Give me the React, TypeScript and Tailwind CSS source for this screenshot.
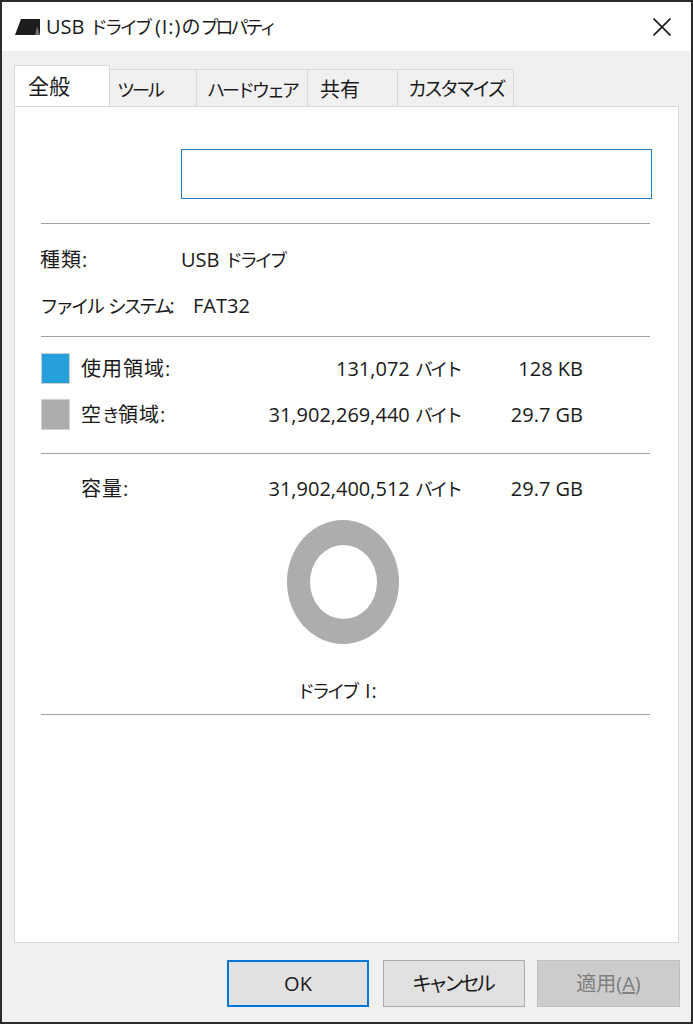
const font = { fontFamily: '"Open Sans", "Noto Sans CJK JP", sans-serif' };

// katakana in the reference is much narrower than Noto's full-width glyphs
function Kana({ children }: { children: string }) {
  return <span className="text-[18px] tracking-[-3px]">{children}</span>;
}

function Tab({ className, children }: { className: string; children: React.ReactNode }) {
  return (
    <div className={`flex h-[37px] items-center whitespace-nowrap border border-b-0 border-l-0 border-[#d9d9d9] bg-[#f0f0f0] pt-[3px] text-[20px] ${className}`}>
      {children}
    </div>
  );
}

function Divider({ className }: { className: string }) {
  return <div className={`ml-[26px] h-px w-[609px] bg-[#a0a0a0] ${className}`} />;
}

function SizeRow({ swatch, label, bytes, size, className }: { swatch?: string; label: React.ReactNode; bytes: string; size: string; className: string }) {
  return (
    <div className={`ml-[26px] flex h-[31px] items-center whitespace-nowrap text-[20px] ${className}`}>
      <div className={`h-[31px] w-[29px] border border-[#d0d0d0] ${swatch ?? "invisible"}`} />
      <div className="ml-[11px] w-[120px] tracking-[1px]">{label}</div>
      <div className="w-[259px] text-right">
        {bytes} <Kana>バイト</Kana>
      </div>
      <div className="w-[123px] text-right">{size}</div>
    </div>
  );
}

export default function App() {
  return (
    <div style={font} className="flex h-[1024px] w-[693px] flex-col overflow-hidden border-2 border-[#2b2b2b] bg-[#f0f0f0] leading-none text-[#1a1a1a]">
      <div className="flex h-[49px] shrink-0 items-center bg-white pl-[13px]">
        <svg width="26" height="20" viewBox="0 0 26 20" className="shrink-0">
          <path d="M6 2 L25 2 L25 18 L0 18 Z" fill="#1c1c1c" />
          <path d="M20 18 L22 9 L25 18 Z" fill="#6f6f6f" />
        </svg>
        <span className="ml-[5px] whitespace-nowrap text-[20px]">
          USB <Kana>ドライブ</Kana> <span className="tracking-[1px]">(I:)</span><span className="text-[19px]">の</span><Kana>プロパティ</Kana>
        </span>
        <svg width="18" height="18" viewBox="0 0 18 18" className="ml-auto mr-[20px]">
          <path d="M0.5 0.5 L17.5 17.5 M17.5 0.5 L0.5 17.5" stroke="#1a1a1a" strokeWidth="1.6" fill="none" />
        </svg>
      </div>

      <div className="ml-[12px] mt-[15px] flex h-[40px] items-end">
        <div className="relative z-10 flex h-[41px] w-[96px] items-center border border-b-0 border-[#d9d9d9] bg-white pl-[13px] text-[21px]">全般</div>
        <Tab className="w-[87px] pl-[7px]"><Kana>ツール</Kana></Tab>
        <Tab className="w-[111px] pl-[10px]"><Kana>ハードウェア</Kana></Tab>
        <Tab className="w-[90px] pl-[12px]">共有</Tab>
        <Tab className="w-[116px] pl-[10px]"><span className="text-[19px] tracking-[-3px]">カスタマイズ</span></Tab>
      </div>

      <div className="mx-[12px] flex h-[837px] flex-col border border-[#d9d9d9] bg-white">
        <div className="ml-[166px] mt-[42px] h-[50px] w-[471px] border border-[#2a7fc4] bg-white" />
        <Divider className="mt-[24px]" />

        <div className="ml-[25px] mt-[24px] flex h-[24px] items-center whitespace-nowrap text-[20px]">
          <div className="w-[141px] tracking-[1px]">種類:</div>
          <div>USB <Kana>ドライブ</Kana></div>
        </div>
        <div className="ml-[25px] mt-[22px] flex h-[24px] items-center whitespace-nowrap text-[20px]">
          <div className="w-[153px]">
            <span className="text-[18.5px] tracking-[-3px]">ファイル</span>
            <span className="ml-[6px] text-[18.5px] tracking-[-3px]">システム</span>:
          </div>
          <div>FAT32</div>
        </div>
        <Divider className="mt-[18px]" />

        <SizeRow swatch="bg-[#26a0da]" label="使用領域:" bytes="131,072" size="128 KB" className="mt-[16px]" />
        <SizeRow
          swatch="bg-[#adadad]"
          label={<>空<span className="text-[18px] tracking-[-2px]">き</span>領域:</>}
          bytes="31,902,269,440"
          size="29.7 GB"
          className="mt-[15px]"
        />
        <Divider className="mt-[23px]" />
        <SizeRow label="容量:" bytes="31,902,400,512" size="29.7 GB" className="mt-[19px]" />

        <div className="ml-[272px] mt-[16px] flex h-[124px] w-[112px] items-center justify-center rounded-[50%] bg-[#adadad]">
          <div className="h-[74px] w-[67px] rounded-[50%] bg-white" />
        </div>
        <div className="ml-[282px] mt-[37px] h-[22px] whitespace-nowrap text-[20px]">
          <Kana>ドライブ</Kana><span className="ml-[8px] tracking-[1px]">I:</span>
        </div>
        <Divider className="mt-[11px]" />
      </div>

      <div className="mt-[17px] flex">
        <button className="ml-[225px] h-[47px] w-[142px] border-2 border-[#0078d7] bg-[#e1e1e1] text-[20px]">OK</button>
        <button className="ml-[14px] h-[47px] w-[142px] border border-[#adadad] bg-[#e1e1e1] pr-[4px] text-[20px]">
          <span className="text-[20px] tracking-[-4px]">キャンセル</span>
        </button>
        <button className="ml-[12px] h-[47px] w-[143px] border border-[#bfbfbf] bg-[#cccccc] text-[20px] text-[#7f7f7f]">
          適用(<span className="underline">A</span>)
        </button>
      </div>
    </div>
  );
}
